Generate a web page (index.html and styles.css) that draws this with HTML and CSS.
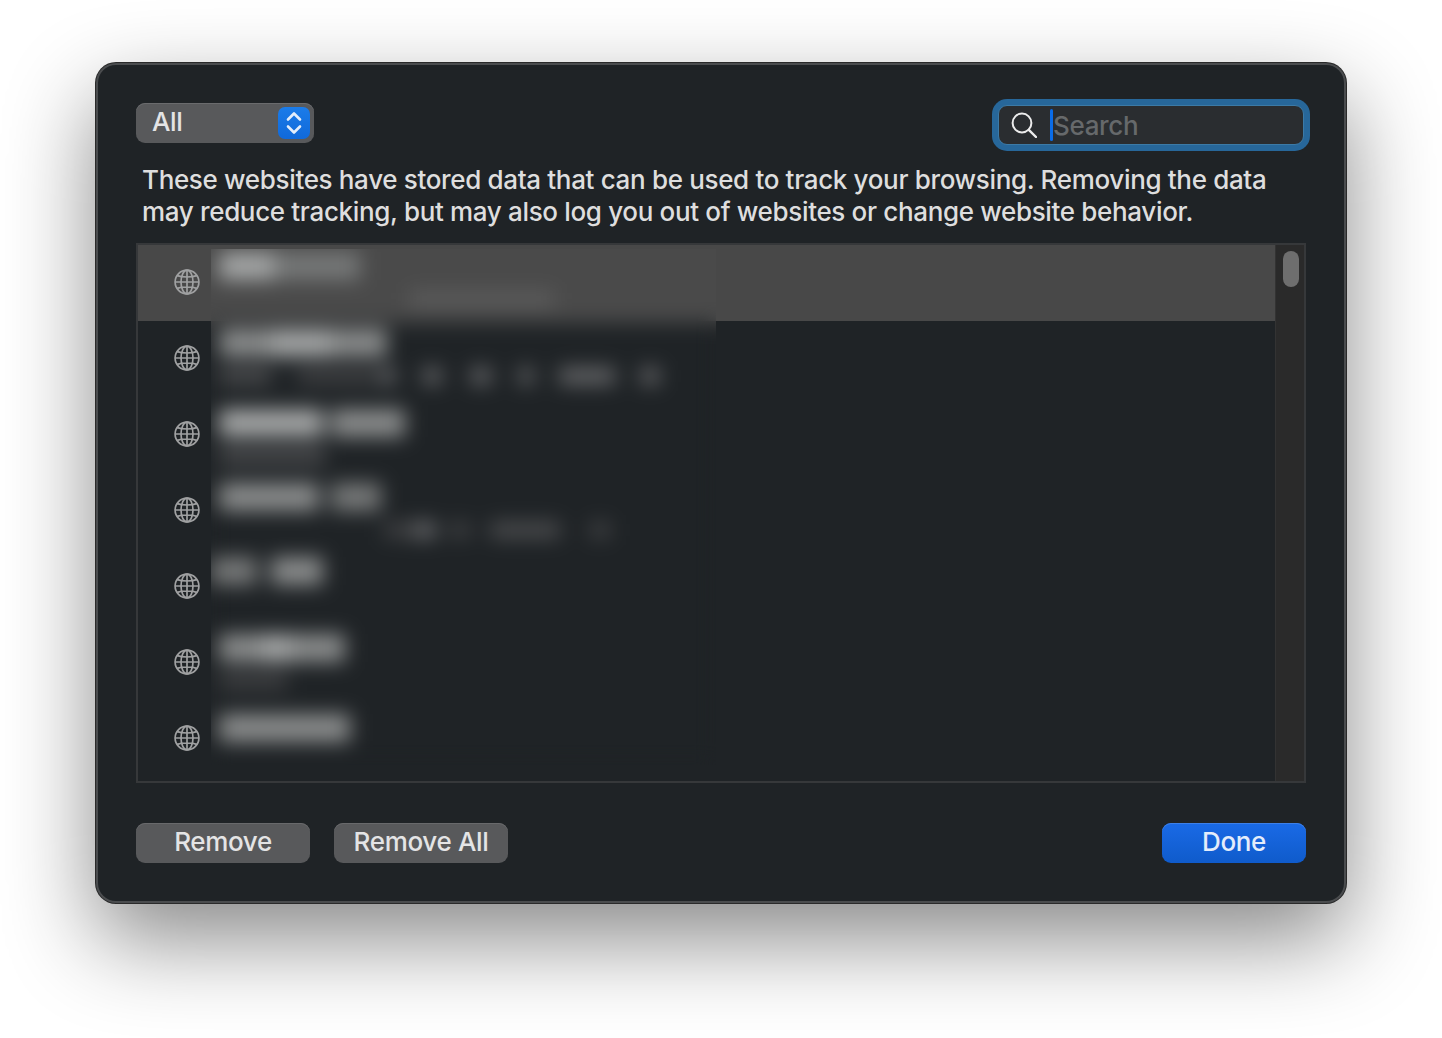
FILE: index.html
```html
<!DOCTYPE html>
<html lang="en">
<head>
<meta charset="utf-8">
<title>Manage Website Data</title>
<link rel="stylesheet" href="styles.css">
</head>
<body>
<svg class="defs" width="0" height="0" aria-hidden="true">
  <symbol id="globe" viewBox="0 0 26 26">
    <g fill="none" stroke="currentColor" stroke-width="1.7">
      <circle cx="13" cy="13" r="11.9"/>
      <ellipse cx="13" cy="13" rx="6" ry="11.9"/>
      <path d="M13 1v24M1 13h24M3.2 6.6c2.6 1 6 1.4 9.8 1.4s7.200-.4 9.800-1.400M3.200 19.400c2.600-1 6-1.400 9.800-1.400s7.200.4 9.800 1.400"/>
    </g>
  </symbol>
</svg>
<main class="stage">
  <section class="window">
    <header class="toolbar">
      <div class="popup">
        <span class="popup-label">All</span>
        <span class="stepper">
          <svg width="18" height="28" viewBox="0 0 18 28"><path d="M3 10.500 9 4.500l6 6M3 17.500l6 6 6-6" fill="none" stroke="#e3edfb" stroke-width="2.600" stroke-linecap="round" stroke-linejoin="round"/></svg>
        </span>
      </div>
      <div class="search">
        <svg class="search-icon" width="26" height="26" viewBox="0 0 26 26"><circle cx="11" cy="11" r="9.400" fill="none" stroke="#ececec" stroke-width="2"/><path d="M17.800 17.800 25 25" fill="none" stroke="#ececec" stroke-width="2.400" stroke-linecap="round"/></svg>
        <span class="caret"></span>
        <span class="placeholder">Search</span>
      </div>
    </header>
    <p class="desc">These websites have stored data that can be used to track your browsing. Removing the data<br>may reduce tracking, but may also log you out of websites or change website behavior.</p>
    <div class="list">
      <div class="rows">
        <div class="row selected"><svg class="globe"><use href="#globe"/></svg></div>
        <div class="row"><svg class="globe"><use href="#globe"/></svg></div>
        <div class="row"><svg class="globe"><use href="#globe"/></svg></div>
        <div class="row"><svg class="globe"><use href="#globe"/></svg></div>
        <div class="row"><svg class="globe"><use href="#globe"/></svg></div>
        <div class="row"><svg class="globe"><use href="#globe"/></svg></div>
        <div class="row"><svg class="globe"><use href="#globe"/></svg></div>
      </div>
      <div class="scrollbar"><span class="thumb"></span></div>
      <div class="redaction">
        <div class="smear">
          <div class="band"></div>
          <div class="entry" style="padding-top:3px">
            <div class="title"><i style="width:55px"></i><i class="low" style="width:86px"></i></div>
            <div class="sub on-band"><b style="width:190px"></b><i style="width:145px"></i></div>
          </div>
          <div class="entry" style="padding-top:4px">
            <div class="title"><i class="dim" style="width:52px"></i><i style="width:60px"></i><i class="dim" style="width:56px"></i></div>
            <div class="sub"><i style="width:52px"></i><b style="width:26px"></b><i class="soft" style="width:78px"></i><b style="width:4px"></b><i class="hi" style="width:16px"></i><b style="width:28px"></b><i class="hi" style="width:18px"></i><b style="width:30px"></b><i class="hi" style="width:20px"></i><b style="width:28px"></b><i class="hi" style="width:14px"></i><b style="width:26px"></b><i class="hi" style="width:56px"></i><b style="width:26px"></b><i class="hi" style="width:18px"></i></div>
          </div>
          <div class="entry" style="padding-top:8px">
            <div class="title"><i style="width:104px"></i><b style="width:8px"></b><i class="dim" style="width:74px"></i></div>
            <div class="sub"><i style="width:106px"></i></div>
          </div>
          <div class="entry" style="padding-top:6px">
            <div class="title"><i class="dim" style="width:100px"></i><b style="width:12px"></b><i class="low" style="width:50px"></i></div>
            <div class="sub"><b style="width:165px"></b><i class="soft" style="width:30px"></i><i class="hi" style="width:22px"></i><b style="width:14px"></b><i class="soft" style="width:20px"></i><b style="width:20px"></b><i style="width:70px"></i><b style="width:30px"></b><i class="soft" style="width:20px"></i></div>
          </div>
          <div class="entry" style="padding-top:4px">
            <div class="title flush"><i class="low" style="width:46px"></i><b style="width:14px"></b><i class="dim" style="width:52px"></i></div>
          </div>
          <div class="entry" style="padding-top:5px">
            <div class="title"><i class="dim" style="width:42px"></i><i style="width:30px"></i><i class="dim" style="width:54px"></i></div>
            <div class="sub"><i class="soft" style="width:68px"></i></div>
          </div>
          <div class="entry" style="padding-top:9px">
            <div class="title"><i class="dim" style="width:131px"></i></div>
          </div>
        </div>
      </div>
    </div>
    <footer class="actions">
      <button class="btn" type="button">Remove</button>
      <button class="btn" type="button">Remove All</button>
      <button class="btn primary" type="button">Done</button>
    </footer>
  </section>
</main>
</body>
</html>
```
FILE: styles.css
```css
* { box-sizing: border-box; }
html, body { margin: 0; height: 100%; background: #fff; overflow: hidden; }
body { font-family: "Inter", "Liberation Sans", sans-serif; font-weight: 450; letter-spacing: -.34px; }
.defs { position: absolute; }
.stage { padding: 63px 96px 0; }
.window {
  width: 1250px;
  height: 840px;
  padding: 40px;
  display: flex;
  flex-direction: column;
  background: #1f2326;
  border-radius: 20px;
  box-shadow: inset 0 0 0 2px #4a4c4e, 0 0 0 1px #2a2a2a, 0 36px 90px rgba(0, 0, 0, .47);
}
.toolbar { display: flex; justify-content: space-between; align-items: flex-start; height: 40px; }
.popup {
  width: 178px;
  height: 40px;
  padding: 0 4px 0 16px;
  display: flex;
  align-items: center;
  justify-content: space-between;
  border-radius: 9px;
  background: #58595b;
  box-shadow: inset 0 1px 0 #6a6b6d;
}
.popup-label { padding-bottom: 3px; color: #e4e4e5; font-size: 26px; }
.stepper {
  width: 32px;
  height: 32px;
  display: flex;
  align-items: center;
  justify-content: center;
  border-radius: 7px;
  background: linear-gradient(#1b7ce9, #1069da);
}
.search {
  width: 306px;
  height: 40px;
  margin: 2px 2px 0 0;
  padding-left: 12px;
  display: flex;
  align-items: center;
  border-radius: 9px;
  background: #2a2d30;
  border: 1px solid #3c7aa6;
  box-shadow: 0 0 0 6px #27679a;
}
.search-icon { flex: none; }
.caret { flex: none; width: 3px; height: 32px; margin-left: 13px; border-radius: 2px; background: #0a6ce9; }
.placeholder { color: #66696b; font-size: 26px; }
.desc {
  margin: 21px 0 15px;
  padding-left: 6px;
  color: #dedede;
  font-size: 26px;
  line-height: 32px;
  white-space: nowrap;
}
.list {
  position: relative;
  height: 540px;
  display: flex;
  border: 2px solid #36383a;
  background: #1f2326;
}
.rows { flex: 1; }
.row { height: 76px; padding-left: 36px; display: flex; align-items: center; color: #a0a1a2; }
.selected { background: #484848; }
.globe { width: 26px; height: 26px; margin-top: -2px; }
.scrollbar { width: 29px; padding: 6px 6px 0 7px; background: #2a2a2a; border-left: 1px solid #333; }
.thumb { display: block; width: 16px; height: 36px; border-radius: 8px; background: #6e6e6e; }
.redaction { position: absolute; left: 73px; top: 4px; width: 505px; height: 516px; overflow: hidden; }
.smear { position: relative; height: 100%; background: #1f2326; filter: blur(10px); }
.band { position: absolute; left: -30px; right: -30px; top: -30px; height: 104px; background: #4a4a4a; }
.entry { position: relative; height: 76px; padding-left: 8px; }
.title { display: flex; height: 28px; }
.flush { margin-left: -8px; }
.title i { display: block; background: #a4a6a6; }
.title i.dim { background: #8a8c8c; }
.title i.low { background: #767878; }
.title b, .sub b { display: block; }
.sub { display: flex; height: 16px; margin-top: 11px; }
.sub i { display: block; background: #4c4d4f; }
.sub i.soft { background: #404143; }
.sub i.hi { background: #68696b; }
.on-band i { background: #5c5c5c; }
.actions { margin-top: 40px; display: flex; gap: 24px; }
.btn {
  width: 174px;
  height: 40px;
  padding: 0 0 3px;
  border: 0;
  border-radius: 9px;
  color: #e4e4e5;
  font: 450 26px "Inter", "Liberation Sans", sans-serif;
  letter-spacing: -.34px;
  background: #58595b;
  box-shadow: inset 0 1px 0 #68696b;
}
.primary {
  width: 144px;
  margin-left: auto;
  color: #e4edfb;
  background: linear-gradient(#1a6ae6, #0f5bcb);
  box-shadow: inset 0 1px 0 #3d80e8;
}
```
